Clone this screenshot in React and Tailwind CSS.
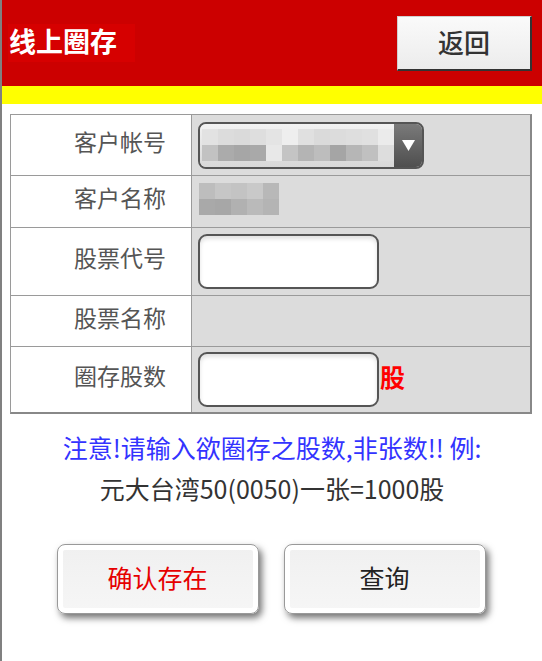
import React from "react";

const font = { fontFamily: '"Noto Sans CJK SC", "Noto Sans", sans-serif' };

function Blocks({ rows }) {
  return (
    <div className="flex flex-col">
      {rows.map((r, i) => (
        <div key={i} className="flex">
          {r.map((c, j) => (
            <div key={j} className="w-[16px] h-[16px]" style={{ background: c }} />
          ))}
        </div>
      ))}
    </div>
  );
}

function Row({ h, label, children, first }) {
  return (
    <div className={`flex ${first ? "" : "border-t border-[#9a9a9a]"}`} style={{ height: h }}>
      <div className="w-[181px] bg-white border-r border-[#9a9a9a] flex items-center justify-end pr-[25px] pb-[8px] text-[23px] text-[#555]">
        {label}
      </div>
      <div className="flex-1 bg-[#dcdcdc] flex items-center pl-[6px]">{children}</div>
    </div>
  );
}

function TextInput() {
  return (
    <div className="w-[181px] h-[55px] rounded-[9px] border-2 border-[#555] bg-white shadow-[inset_0_3px_4px_rgba(0,0,0,0.12)]" />
  );
}

export default function App() {
  return (
    <div className="w-[542px] min-h-[661px] bg-white border-l-2 border-[#808080]" style={font}>
      <div className="h-[86px] bg-[#cc0000] flex items-center justify-between pl-[6px] pr-[10px]">
        <div className="bg-[#d60000] h-[38px] px-[1px] pr-[18px] pb-[4px] flex items-center text-white text-[27px] font-bold">
          线上圈存
        </div>
        <div className="w-[135px] h-[55px] flex items-center justify-center pb-[3px] bg-gradient-to-b from-[#fafafa] to-[#ececec] border border-[#cfcfcf] border-r-2 border-b-2 border-r-[#333] border-b-[#333] text-[26px] font-medium text-[#333]">
          返回
        </div>
      </div>
      <div className="h-[18px] bg-[#ffff00]" />

      <div className="ml-[8px] mr-[10px] mt-[10px] border border-[#9a9a9a] border-r-2 border-r-[#888] border-b-2 border-b-[#888]">
        <Row h={60} label="客户帐号" first>
          <div className="w-[226px] h-[47px] rounded-[8px] border-2 border-[#555] overflow-hidden flex">
            <div className="flex-1 bg-gradient-to-b from-[#f2f2f2] to-[#d8d8d8] flex items-center pl-[2px]">
              <Blocks
                rows={[
                  ["#e2e2e2", "#dcdcdc", "#dadada", "#dedede", "#e4e4e4", "#eeeeee", "#e0e0e0", "#dadada", "#dcdcdc", "#dedede", "#e0e0e0", "#ebebeb"],
                  ["#c2c2c2", "#ababab", "#a6a6a6", "#a9a9a9", "#e8e8e8", "#c4c4c4", "#b4b4b4", "#bdbdbd", "#a5a5a5", "#b6b6b6", "#c0c0c0", "#dddddd"],
                ]}
              />
            </div>
            <div className="w-[37px] bg-gradient-to-b from-[#7a7a7a] to-[#4f4f4f] flex items-center justify-center">
              <svg width="13" height="11" viewBox="0 0 13 11">
                <polygon points="0,0 13,0 6.5,11" fill="#fff" />
              </svg>
            </div>
          </div>
        </Row>
        <Row h={52} label="客户名称">
          <div className="pl-[1px] pb-[6px]">
            <Blocks
              rows={[
                ["#bdbdbd", "#c6c6c6", "#c3c3c3", "#c9c9c9", "#b8b8b8"],
                ["#a9a9a9", "#a7a7a7", "#b1b1b1", "#bababa", "#b4b4b4"],
              ]}
            />
          </div>
        </Row>
        <Row h={68} label="股票代号">
          <TextInput />
        </Row>
        <Row h={51} label="股票名称" />
        <Row h={66} label="圈存股数">
          <TextInput />
          <span className="text-[25px] font-bold text-[#ff0000] ml-[1px] pb-[6px]">股</span>
        </Row>
      </div>

      <div className="mt-[13px] text-center text-[25px] leading-[41px]">
        <div className="text-[#3333ff]">注意!请输入欲圈存之股数,非张数!! 例:</div>
        <div className="text-[#333]">元大台湾50(0050)一张=1000股</div>
      </div>

      <div className="mt-[35px] flex justify-center gap-[25px] pr-[2px]">
        <div className="w-[202px] h-[70px] rounded-[8px] border border-[#999] bg-gradient-to-b from-[#f0f0f0] to-[#f6f6f6] shadow-[inset_0_0_0_5px_#fff,3px_4px_7px_rgba(0,0,0,0.55)] flex items-center justify-center pb-[2px] text-[25px] text-[#e60000]">
          确认存在
        </div>
        <div className="w-[202px] h-[70px] rounded-[8px] border border-[#999] bg-gradient-to-b from-[#f0f0f0] to-[#f6f6f6] shadow-[inset_0_0_0_5px_#fff,3px_4px_7px_rgba(0,0,0,0.55)] flex items-center justify-center pb-[2px] text-[25px] text-[#222]">
          查询
        </div>
      </div>
    </div>
  );
}
